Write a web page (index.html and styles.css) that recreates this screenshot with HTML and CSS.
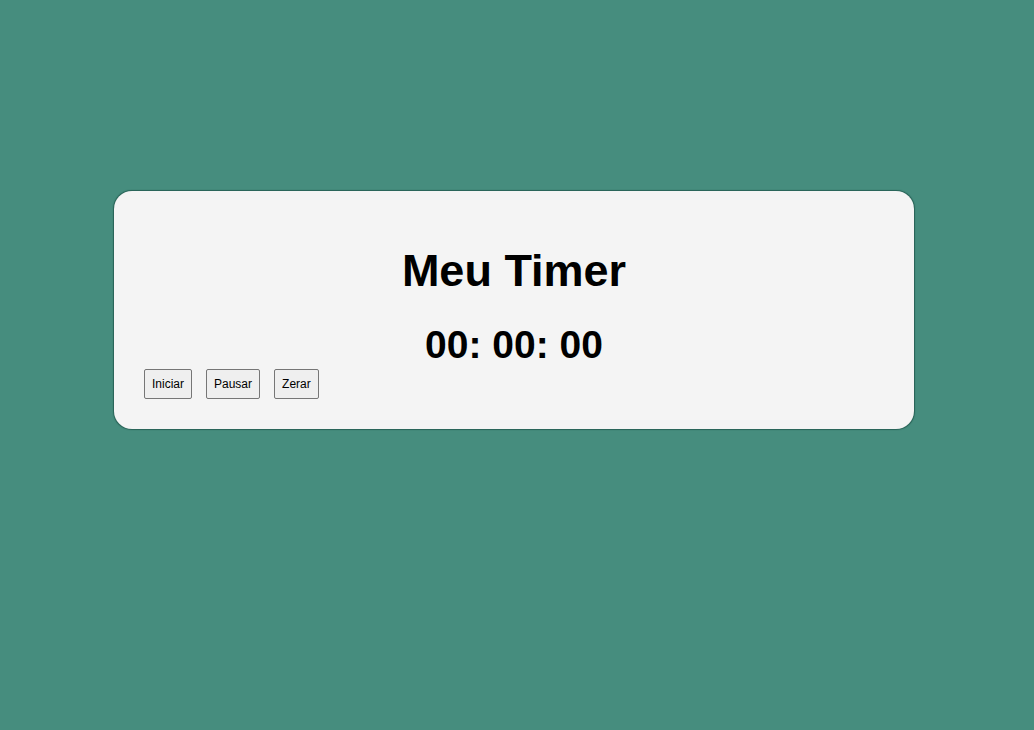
FILE: index.html
```html
<!DOCTYPE html>
<html lang="pt-BR">
<head>
<meta charset="utf-8">
<title>Meu Timer</title>
<link rel="stylesheet" href="styles.css">
</head>
<body>
<main class="card">
  <h1 class="title">Meu Timer</h1>
  <div class="time">00: 00: 00</div>
  <div class="actions">
    <button class="btn">Iniciar</button>
    <button class="btn">Pausar</button>
    <button class="btn">Zerar</button>
  </div>
</main>
</body>
</html>
```
FILE: styles.css
```css
html, body {
  margin: 0;
  padding: 0;
}
body {
  background: #468d7e;
  font-family: "Liberation Sans", Arial, sans-serif;
  min-height: 730px;
  padding-top: 191px;
  box-sizing: border-box;
}
.card {
  box-sizing: border-box;
  width: 800px;
  height: 238px;
  margin-left: 114px;
  background: #f4f4f4;
  border-radius: 18px;
  box-shadow: 0 0 1px 0.5px rgba(20, 70, 60, 0.6);
  padding: 30px 30px;
  display: flex;
  flex-direction: column;
}
.title {
  margin: 25px 0 0;
  font-size: 45px;
  line-height: 50px;
  font-weight: bold;
  text-align: center;
  color: #000;
}
.time {
  margin-top: 27px;
  font-size: 39px;
  line-height: 44px;
  font-weight: bold;
  text-align: center;
  color: #000;
}
.actions {
  display: flex;
  gap: 14px;
  margin-top: 2px;
}
.btn {
  font-family: "Liberation Sans", Arial, sans-serif;
  font-size: 12px;
  line-height: 14px;
  padding: 7px 7px;
  background: #efefef;
  border: 1px solid #767676;
  border-radius: 2px;
  color: #000;
}
```
